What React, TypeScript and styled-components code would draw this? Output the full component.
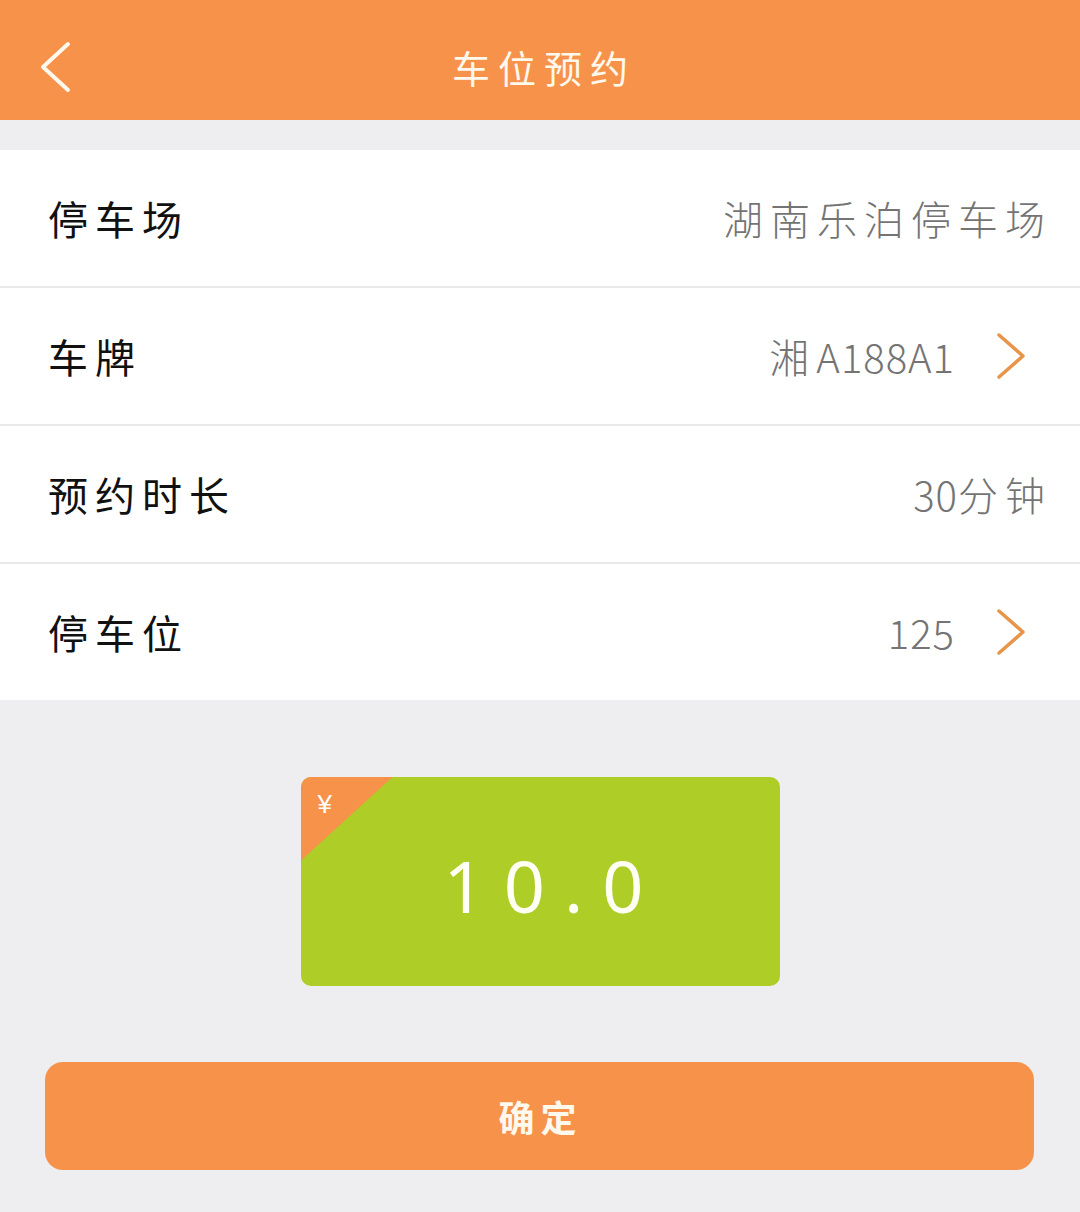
import React from "react";
import styled, { createGlobalStyle } from "styled-components";

const Global = createGlobalStyle`
  html, body { margin: 0; padding: 0; }
  body {
    background: #eeedf0;
    font-family: "Noto Sans CJK SC", "Noto Sans", sans-serif;
  }
`;

const Page = styled.div`
  width: 1080px;
  min-height: 1212px;
  background: #eeedf0;
  display: flex;
  flex-direction: column;
`;

const Header = styled.header`
  height: 120px;
  background: #f7924a;
  display: grid;
  grid-template-columns: 120px 1fr 120px;
  align-items: center;
  padding-top: 14px;
  box-sizing: border-box;
`;

const BackButton = styled.button`
  background: none;
  border: none;
  padding: 0 0 0 38px;
  display: flex;
  align-items: center;
  cursor: pointer;
`;

const Title = styled.h1`
  margin: 0;
  text-align: center;
  color: #fff8ec;
  font-size: 38px;
  font-weight: 400;
  letter-spacing: 8px;
  padding-left: 8px;
  line-height: 1;
`;

const List = styled.section`
  margin-top: 30px;
  display: flex;
  flex-direction: column;
  gap: 2px;
  background: #e9e9eb;
`;

const Row = styled.div<{ $chevron?: boolean }>`
  height: 136px;
  background: #ffffff;
  display: flex;
  align-items: center;
  justify-content: space-between;
  padding: 0 ${(p) => (p.$chevron ? "51px" : "28px")} 0 48px;
`;

const Label = styled.span`
  font-size: 40px;
  color: #111111;
  letter-spacing: 7px;
  line-height: 1;
`;

const ValueWrap = styled.span`
  display: flex;
  align-items: center;
  gap: 40px;
`;

const Value = styled.span`
  font-size: 40px;
  color: #747474;
  letter-spacing: 7px;
  line-height: 1;
  font-weight: 300;
`;

const Num = styled.span`
  letter-spacing: 1px;
`;

const PriceCard = styled.div`
  position: relative;
  margin: 77px auto 0;
  width: 479px;
  height: 209px;
  border-radius: 10px;
  background: #aecd27;
  overflow: hidden;
  display: flex;
  align-items: center;
  justify-content: center;
`;

const Corner = styled.div`
  position: absolute;
  left: 0;
  top: 0;
  width: 92px;
  height: 84px;
  background: #f7924a;
  clip-path: polygon(0 0, 100% 0, 0 100%);
`;

const Yen = styled.span`
  position: absolute;
  left: 17px;
  top: 14px;
  color: #ffffff;
  font-family: "Liberation Sans", sans-serif;
  font-size: 26px;
  line-height: 1;
`;

const Amount = styled.span`
  color: #fffff4;
  font-family: "Noto Sans", sans-serif;
  font-weight: 400;
  font-size: 72px;
  letter-spacing: 19px;
  padding-left: 26px;
  line-height: 1;
  margin-top: 6px;
`;

const Confirm = styled.button`
  margin: 76px 46px 0 45px;
  height: 108px;
  border: none;
  border-radius: 18px;
  background: #f7924a;
  color: #fff8ec;
  font-family: "Noto Sans CJK SC", sans-serif;
  font-size: 36px;
  font-weight: 700;
  letter-spacing: 6px;
  padding-left: 8px;
  cursor: pointer;
`;

const Chevron = () => (
  <svg width="34" height="50" viewBox="0 0 34 50">
    <polyline
      points="4,4 28,25 4,46"
      fill="none"
      stroke="#e8954c"
      strokeWidth="3.5"
      strokeLinecap="round"
      strokeLinejoin="round"
    />
  </svg>
);

const BackIcon = () => (
  <svg width="34" height="52" viewBox="0 0 34 52">
    <polyline
      points="30,3 5,26 30,49"
      fill="none"
      stroke="#fff8ec"
      strokeWidth="4"
      strokeLinecap="round"
      strokeLinejoin="round"
    />
  </svg>
);

export default function App() {
  return (
    <Page>
      <Global />
      <Header>
        <BackButton aria-label="返回">
          <BackIcon />
        </BackButton>
        <Title>车位预约</Title>
        <span />
      </Header>
      <List>
        <Row>
          <Label>停车场</Label>
          <Value>湖南乐泊停车场</Value>
        </Row>
        <Row $chevron>
          <Label>车牌</Label>
          <ValueWrap>
            <Value>
              湘<Num>A188A1</Num>
            </Value>
            <Chevron />
          </ValueWrap>
        </Row>
        <Row>
          <Label>预约时长</Label>
          <Value>
            <Num>30</Num>分钟
          </Value>
        </Row>
        <Row $chevron>
          <Label>停车位</Label>
          <ValueWrap>
            <Value>
              <Num>125</Num>
            </Value>
            <Chevron />
          </ValueWrap>
        </Row>
      </List>
      <PriceCard>
        <Corner />
        <Yen>¥</Yen>
        <Amount>10.0</Amount>
      </PriceCard>
      <Confirm>确定</Confirm>
    </Page>
  );
}
